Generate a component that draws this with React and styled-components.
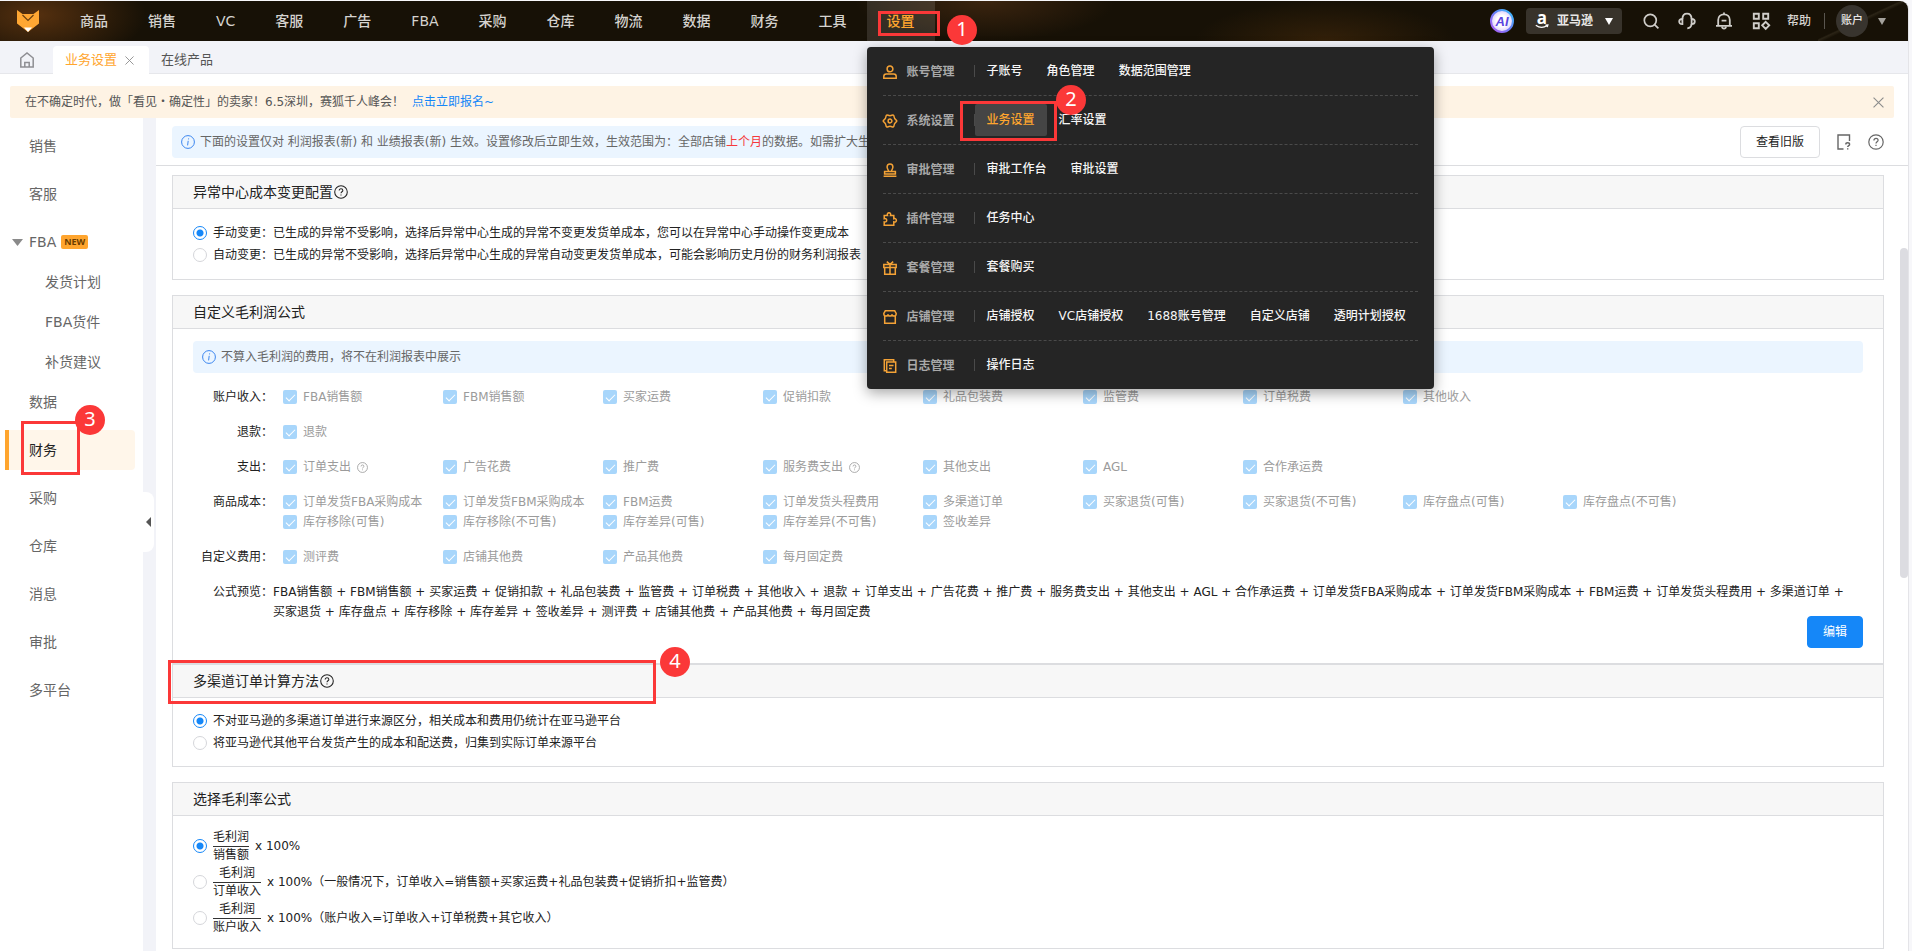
import React, { useState } from "react";
import styled, { createGlobalStyle, ThemeProvider, css } from "styled-components";

const theme = {
  brand: "#ffa52e",
  primary: "#1587f8",
  text: "#222222",
  sub: "#666666",
  disabled: "#9b9b9b",
  line: "#dcdde0",
  page: "#f2f3f8",
  mark: "#fb3838",
};

const GlobalStyle = createGlobalStyle`
  *, *::before, *::after { box-sizing: border-box; }
  body {
    margin: 0;
    background: #f7f7fa;
    color: #222222;
    font: 12px/20px "DejaVu Sans", "Noto Sans CJK SC", sans-serif;
  }
  a { color: inherit; text-decoration: none; }
  ul { list-style: none; margin: 0; padding: 0; }
  button, select { font: inherit; color: inherit; cursor: pointer; }
  svg { display: block; flex: none; overflow: visible; }
`;

/* ---------- icons ---------- */

const HelpIcon = ({ size = 14 }) => (
  <svg width={size} height={size} viewBox="0 0 16 16" fill="none" stroke="currentColor" strokeWidth="1.2">
    <circle cx="8" cy="8" r="7.2" />
    <path d="M5.9 6.4c0-1.3.9-2.1 2.1-2.1s2.1.8 2.1 1.9c0 1.5-2.1 1.6-2.1 3.2" />
    <path d="M8 10.8v1.2" />
  </svg>
);

const InfoIcon = () => (
  <svg width="14" height="14" viewBox="0 0 14 14" fill="none" stroke="#3b86f0" strokeWidth="1">
    <circle cx="7" cy="7" r="6.4" />
    <path d="M7.2 5.8 6.6 10.4M7.6 3.4 7.5 4.4" />
  </svg>
);

const CloseIcon = ({ size }) => (
  <svg width={size} height={size} viewBox="0 0 10 10" fill="none" stroke="#8c8c8c" strokeWidth="1">
    <path d="M.5.5l9 9M9.5.5l-9 9" />
  </svg>
);

const FoxLogo = () => (
  <svg width="24" height="24" viewBox="0 0 24 24">
    <path d="M1 1 6.5 5h11L23 1v13.5L12 23 1 14.500z" fill="#ffa733" />
    <path d="M6.500 6 12 11.500 17.500 6" fill="none" stroke="#6b400f" strokeWidth="1.2" />
    <path d="M8 18.600h8L12 23z" fill="#fff" />
  </svg>
);

const HomeIcon = () => (
  <svg width="16" height="16" viewBox="0 0 16 16" fill="none" stroke="#8e8e93" strokeWidth="1.5">
    <path d="M1.800 6 8 1l6.200 5v9H1.800z" />
    <path d="M5.800 15v-4.500h4.400V15" />
  </svg>
);

const AiIcon = () => (
  <svg width="24" height="24" viewBox="0 0 24 24">
    <defs>
      <linearGradient id="ai-ring" x1="0" y1="1" x2="1" y2="0">
        <stop offset="0" stopColor="#b45cf5" />
        <stop offset=".5" stopColor="#6a7cf8" />
        <stop offset="1" stopColor="#35c3fa" />
      </linearGradient>
      <radialGradient id="ai-fill">
        <stop offset=".5" stopColor="#ffffff" />
        <stop offset="1" stopColor="#dccdfb" />
      </radialGradient>
    </defs>
    <circle cx="12" cy="12" r="11" fill="url(#ai-fill)" stroke="url(#ai-ring)" strokeWidth="2" />
    <text x="12" y="16.500" textAnchor="middle" fontFamily="Liberation Sans, sans-serif" fontSize="13" fontWeight="700" fontStyle="italic" fill="#5b45e0">
      AI
    </text>
  </svg>
);

const AmazonIcon = () => (
  <svg width="14" height="16" viewBox="0 0 14 16">
    <text x="7" y="11" textAnchor="middle" fontFamily="Open Sans, sans-serif" fontSize="17" fontWeight="700" fill="#fff">
      a
    </text>
    <path d="M.8 12.200c3.400 2.600 8 2.600 11.400.4M10.500 12.200l2.400-.2-.6 2.200" fill="none" stroke="#fff" strokeWidth="1.200" />
  </svg>
);

const Caret = ({ width = 8, height = 7, color = "#fff" }) => (
  <svg width={width} height={height} viewBox="0 0 8 7" preserveAspectRatio="none" fill={color}>
    <path d="M0 0h8L4 7z" />
  </svg>
);

const SearchIcon = () => (
  <svg width="16" height="16" viewBox="0 0 16 16" fill="none" stroke="#cfcdc9" strokeWidth="1.700">
    <circle cx="7.300" cy="7.300" r="6" />
    <path d="m11.600 11.600 3.800 3.800" />
  </svg>
);

const HeadsetIcon = () => (
  <svg width="18" height="18" viewBox="0 0 18 18" fill="none" stroke="#cfcdc9" strokeWidth="1.800">
    <path d="M4.400 12.200C2 12.200 1.200 10.800 1.200 9.500S2 6.800 4.400 6.800v5.400zM13.600 6.800c2.400 0 3.200 1.400 3.200 2.700s-.8 2.700-3.200 2.700V6.800z" />
    <path d="M4.400 6.800C4.600 3.500 6.200 1.700 9 1.700s4.400 1.800 4.600 5.100M13.600 12.200c-.3 2.600-1.600 4-4.300 4.200" />
  </svg>
);

const BellIcon = () => (
  <svg width="18" height="18" viewBox="0 0 18 18" fill="none" stroke="#cfcdc9" strokeWidth="1.800">
    <path d="M1 13.800h16M3.200 13.800V8c0-3.300 2.400-5.600 5.800-5.600s5.800 2.300 5.800 5.600v5.800M9 2.400V.6M6.600 8.700h4.800" />
    <path d="M7 14.600c.2 1.400 1 2 2 2s1.800-.6 2-2" />
  </svg>
);

const AppsIcon = () => (
  <svg width="18" height="18" viewBox="0 0 18 18" fill="none" stroke="#cfcdc9" strokeWidth="1.900">
    <path d="M1.800 1.800h5v5h-5zM11.200 1.800h5v5h-5zM1.800 11.200h5v5h-5zM13.700 9.800l3.500 3.500-3.500 3.500-3.500-3.500z" />
  </svg>
);

const GuideIcon = () => (
  <svg width="16" height="16" viewBox="0 0 16 16" fill="none" stroke="#666" strokeWidth="1.400">
    <path d="M7.500 15H2V1h11.500v6" />
    <path d="M9.800 10.500c0-1.100.8-1.700 1.900-1.700s1.900.7 1.900 1.600c0 1.200-1.900 1.300-1.900 2.700M11.700 14.200v1.200" />
  </svg>
);

const MENU_PATHS = {
  account: "M7 1a2.900 2.900 0 1 1 0 5.800A2.900 2.900 0 0 1 7 1zM.8 13.200v-1.700c0-1.500 1-2.500 2.500-2.500h7.400c1.500 0 2.500 1 2.500 2.500v1.700z",
  system:
    "M12.920 5.780Q14.600 7 12.920 8.220Q11.240 9.450 11.020 11.500Q10.800 13.580 8.900 12.740Q7 11.900 5.100 12.740Q3.200 13.580 2.980 11.500Q2.760 9.450 1.080 8.220Q-.6 7 1.080 5.780Q2.760 4.550 2.980 2.500Q3.200.42 5.100 1.260Q7 2.100 8.900 1.260Q10.800.42 11.020 2.500Q11.240 4.550 12.920 5.780zM7 5.100a1.900 1.900 0 1 1 0 3.800 1.900 1.900 0 0 1 0-3.800z",
  approve: "M5.600 8.300c0-1.400-1.500-2.200-1.500-4.200C4.100 2.200 5.300.9 7 .9s2.900 1.300 2.900 3.200c0 2-1.500 2.800-1.500 4.200M1.600 11V8.500h10.800V11zM.6 13.200h12.800",
  plugin:
    "M1.200 3.600h3.300c-.6-1.600.2-2.900 1.500-2.900s2.100 1.300 1.500 2.900h3.300v3.100c1.500-.5 2.600.3 2.600 1.600s-1.100 2.100-2.600 1.600v3.300H1.200V9.900c1.700.4 2.500-.5 2.500-1.600S2.900 6.300 1.200 6.700z",
  package: "M.8 3.400h12.400v3.100H.8zM1.700 6.500v6.700h10.600V6.500M7 3.400v9.800M3.800.6 7 3.400 10.200.6",
  shop: "M1.700 6.300v6.900h10.600V6.300M2.300.8h9.400l1.500 2.700c0 1.700-.8 2.600-2.100 2.600S9 5.300 9 4.200c0 1.100-.8 1.900-2 1.900s-2-.8-2-1.900c0 1.100-.8 1.900-2.100 1.900S.8 5.200.8 3.500z",
  log: "M3.700 3h9v10.300h-9zM10.700 3V.8H1.300v11h2.400M6 6.500h4.500M6 9.500h2.800",
};

const MenuIcon = ({ name }) => (
  <svg width="14" height="14" viewBox="0 0 14 14" fill="none" stroke="#f4a236" strokeWidth="1.500">
    <path d={MENU_PATHS[name]} />
  </svg>
);

/* ---------- layout ---------- */

const Page = styled.div`
  position: relative;
  height: 100vh;
  overflow: hidden;
  padding: 1px 3px 0 0;
`;

const Window = styled.div`
  height: 100%;
  display: flex;
  flex-direction: column;
  background: #ffffff;
  border-right: 1px solid #e4e4e8;
  border-top-right-radius: 8px;
`;

const TopBar = styled.header`
  position: relative;
  z-index: 2;
  flex: none;
  display: flex;
  align-items: stretch;
  height: 40px;
  padding-left: 16px;
  padding-right: 22px;
  border-top-right-radius: 8px;
  color: #d5d3cf;
  background:
    linear-gradient(155deg, transparent 46%, #2b2416 48%, transparent 52%) right / 90px 100% no-repeat,
    radial-gradient(ellipse 110px 50px at 36px 14px, #55300f, transparent) no-repeat,
    radial-gradient(ellipse 130px 40px at 985px 0, #3b240f, transparent) no-repeat,
    radial-gradient(ellipse 130px 40px at 1325px 40px, #332009, transparent) no-repeat,
    #171106;
`;

const Logo = styled.a`
  display: flex;
  align-items: center;
  width: 44px;
`;

const Nav = styled.ul`
  display: flex;
  flex: 1;
`;

const NavItem = styled.li`
  position: relative;
  font-size: 14px;
  font-weight: 500;
  line-height: 40px;
  ${({ $active }) => $active && css`
    color: ${({ theme }) => theme.brand};
    background: rgba(255, 255, 255, 0.12);
  `}

  > a {
    display: block;
    padding: 0 20px;
  }
`;

const Menu = styled.div`
  position: absolute;
  top: calc(100% + 6px);
  left: 0;
  width: 567px;
  padding: 0 16px;
  border-radius: 4px;
  background: #252525;
  box-shadow: 0 4px 14px rgba(0, 0, 0, 0.35);
  font-size: 12px;
  line-height: 32px;
  white-space: nowrap;
`;

const MenuRow = styled.div`
  display: flex;
  align-items: center;
  height: 49px;
  border-bottom: 1px dashed #4a4a4a;

  &:last-child {
    height: 48px;
    border-bottom: 0;
  }
`;

const MenuGroup = styled.div`
  flex: none;
  display: flex;
  align-items: center;
  gap: 10px;
  width: 91px;
  padding-top: 2px;
  color: #a9a9a9;
  font-weight: 700;
`;

const MenuLinks = styled.div`
  display: flex;
  align-items: center;
  color: #f6f6f6;

  &::before {
    content: "";
    width: 1px;
    height: 12px;
    background: #4a4a4a;
  }
`;

const MenuLink = styled.a`
  padding: 0 12px;
  border-radius: 2px;
  ${({ $active }) => $active && css`
    color: ${({ theme }) => theme.brand};
    background: #454545;
  `}
`;

const Tools = styled.div`
  display: flex;
  align-items: center;
  font-weight: 500;
`;

const PlainButton = styled.button`
  display: flex;
  align-items: center;
  justify-content: center;
  padding: 0;
  border: 0;
  background: none;
`;

const ToolIcons = styled.div`
  display: flex;
  align-items: center;
  gap: 19px;
  margin: 0 17px 0 21px;
`;

const Platform = styled.label`
  display: flex;
  align-items: center;
  gap: 8px;
  height: 26px;
  margin-left: 12px;
  padding: 0 9px;
  border-radius: 4px;
  background: #38332b;
  color: #e8e7e5;

  select {
    appearance: none;
    width: 40px;
    padding: 0;
    border: 0;
    background: none;
    font-weight: 700;
  }
`;

const Account = styled(PlainButton)`
  gap: 10px;
  margin-left: 13px;
  padding-left: 12px;
  position: relative;

  &::before {
    content: "";
    position: absolute;
    left: 0;
    width: 1px;
    height: 16px;
    background: #5a564f;
  }
`;

const Avatar = styled.span`
  width: 32px;
  height: 32px;
  border-radius: 50%;
  background: #38342e;
  color: #e8e7e5;
  font-size: 11px;
  line-height: 32px;
  text-align: center;
`;

const Tabs = styled.div`
  flex: none;
  display: flex;
  align-items: flex-end;
  height: 33px;
  background: ${({ theme }) => theme.page};
  box-shadow: inset 0 -1px #e6e7eb;
  font-size: 13px;
`;

const HomeTab = styled.a`
  display: flex;
  align-items: center;
  justify-content: center;
  width: 53px;
  height: 28px;
`;

const Tab = styled.div`
  display: flex;
  align-items: center;
  gap: 8px;
  height: 28px;
  padding: 0 15px 0 12px;
  border-radius: 4px 4px 0 0;
  color: ${({ theme, $active }) => ($active ? theme.brand : "#555555")};
  background: ${({ $active }) => ($active ? "#ffffff" : "none")};
`;

const Notice = styled.div`
  flex: none;
  display: flex;
  align-items: center;
  height: 32px;
  margin: 12px 14px 0 10px;
  padding: 0 10px 0 15px;
  border-radius: 2px;
  background: #fef3e4;
  color: #555555;

  a {
    flex: 1;
    margin-left: 8px;
    color: ${({ theme }) => theme.primary};
  }
`;

const Body = styled.div`
  flex: 1;
  min-height: 0;
  display: flex;
`;

const SideBar = styled.nav`
  position: relative;
  flex: none;
  width: 156px;
  padding: 8px 8px 0 5px;
  border-right: 13px solid ${({ theme }) => theme.page};
  font-size: 14px;
  line-height: 40px;
  color: ${({ theme }) => theme.sub};
`;

const SideItem = styled.a`
  display: block;
  height: 40px;
  margin-bottom: 8px;
  padding-left: 24px;
  ${({ $active }) => $active && css`
    padding-left: 20px;
    border-left: 4px solid ${({ theme }) => theme.brand};
    border-radius: 0 4px 4px 0;
    background: #fff6ea;
    color: ${({ theme }) => theme.text};
  `}
`;

const SideGroup = styled.button`
  display: flex;
  align-items: center;
  gap: 5px;
  width: 100%;
  height: 40px;
  padding: 0 0 0 7px;
  border: 0;
  background: none;

  svg {
    margin-right: 1px;
  }
`;

const SubItem = styled.a`
  display: block;
  height: 40px;
  padding-left: 40px;
`;

const NewTag = styled.span`
  padding: 0 3px;
  border-radius: 2px;
  background: ${({ theme }) => theme.brand};
  color: #6b3d00;
  font: 700 9px/14px "Noto Sans", sans-serif;
`;

const Collapse = styled(PlainButton)`
  position: absolute;
  right: -11px;
  top: 374px;
  width: 11px;
  height: 60px;
  border-radius: 0 8px 8px 0;
  background: #ffffff;
`;

const Main = styled.main`
  flex: 1;
  min-width: 0;
  display: flex;
  flex-direction: column;
`;

const MainHead = styled.div`
  flex: none;
  display: flex;
  align-items: center;
  justify-content: space-between;
  height: 48px;
  padding: 0 24px 0 16px;
  border-bottom: 1px solid ${({ theme }) => theme.line};
`;

const Tip = styled.div`
  display: flex;
  align-items: center;
  gap: 5px;
  height: 32px;
  padding: 0 9px;
  border-radius: 4px;
  background: #ebf5ff;
  color: ${({ theme }) => theme.sub};
  white-space: nowrap;

  em {
    font-style: normal;
    color: #f5393c;
  }
`;

const HeadActions = styled.div`
  display: flex;
  align-items: center;
  gap: 16px;
  color: ${({ theme }) => theme.sub};
`;

const Button = styled.button`
  height: 32px;
  padding: 0 15px;
  border: 1px solid ${({ theme, $primary }) => ($primary ? theme.primary : theme.line)};
  border-radius: 4px;
  background: ${({ theme, $primary }) => ($primary ? theme.primary : "#ffffff")};
  color: ${({ theme, $primary }) => ($primary ? "#ffffff" : theme.text)};
`;

const Scroll = styled.div`
  flex: 1;
  min-height: 0;
  display: flex;
  overflow: hidden;
`;

const Cards = styled.div`
  flex: 1;
  min-width: 0;
  padding: 9px 16px 0;
`;

const Thumb = styled.div`
  width: 8px;
  height: 42%;
  margin-top: 82px;
  border-radius: 4px;
  background: #dcdce1;
`;

const Card = styled.section`
  margin-bottom: ${({ $joined }) => ($joined ? 0 : 15)}px;
  border: 1px solid ${({ theme }) => theme.line};
`;

const CardTitle = styled.h2`
  display: flex;
  align-items: center;
  gap: 1px;
  height: 33px;
  margin: 0;
  padding: 0 20px;
  border-bottom: 1px solid ${({ theme }) => theme.line};
  background: #f7f7f7;
  font-size: 14px;
  font-weight: 400;
`;

const CardBody = styled.div`
  padding: ${({ $pad = 12 }) => $pad}px 20px;
`;

const RadioLine = styled.label`
  display: flex;
  align-items: center;
  gap: 6px;
  min-height: 22px;

  input {
    appearance: none;
    flex: none;
    width: 14px;
    height: 14px;
    margin: 0;
    border: 1px solid #d5d6da;
    border-radius: 50%;
    background: #ffffff;
  }

  input:checked {
    border-color: ${({ theme }) => theme.primary};
    background: radial-gradient(circle, ${({ theme }) => theme.primary} 3px, #ffffff 4px);
  }
`;

const RatioLine = styled(RadioLine)`
  height: 36px;
`;

const Fraction = styled.span`
  text-align: center;
  line-height: 17px;

  span {
    display: block;
  }

  span:first-child {
    border-bottom: 1px solid #333333;
  }
`;

const FeeTable = styled.div`
  padding-top: 14px;
`;

const FeeRow = styled.div`
  display: flex;
  margin-bottom: 15px;

  &:last-child {
    margin-bottom: 0;
  }
`;

const FeeLabel = styled.div`
  flex: none;
  width: 80px;
  text-align: right;
`;

const FeeGrid = styled.div`
  flex: 1;
  display: grid;
  grid-template-columns: repeat(auto-fill, 160px);
  padding-left: 10px;
`;

const CheckLabel = styled.label`
  display: flex;
  align-items: center;
  gap: 6px;
  white-space: nowrap;
  color: ${({ theme }) => theme.disabled};

  input {
    appearance: none;
    display: grid;
    place-content: center;
    width: 14px;
    height: 14px;
    margin: 0;
    border-radius: 2px;
    background: #a8d6fb;
  }

  input:checked::before {
    content: "";
    width: 5px;
    height: 9px;
    margin-bottom: 2px;
    border: solid #ffffff;
    border-width: 0 1px 1px 0;
    transform: rotate(45deg);
  }
`;

const Formula = styled.div`
  flex: 1;
  padding-right: 8px;
`;

const Actions = styled.div`
  display: flex;
  justify-content: flex-end;
  margin-top: -6px;
  padding-bottom: 3px;
`;

/* step markers floating over the page */
const MarkBox = styled.div`
  position: absolute;
  z-index: 3;
  left: ${({ $x }) => $x}px;
  top: ${({ $y }) => $y}px;
  width: ${({ $w }) => $w}px;
  height: ${({ $h }) => $h}px;
  border: 3px solid ${({ theme }) => theme.mark};
  pointer-events: none;
`;

const MarkDot = styled.div`
  position: absolute;
  z-index: 3;
  left: ${({ $x }) => $x}px;
  top: ${({ $y }) => $y}px;
  width: 30px;
  height: 30px;
  border-radius: 50%;
  background: ${({ theme }) => theme.mark};
  color: #ffffff;
  font-family: "Noto Sans", sans-serif;
  font-size: 20px;
  line-height: 28px;
  text-align: center;
`;

/* ---------- data ---------- */

const NAV = ["商品", "销售", "VC", "客服", "广告", "FBA", "采购", "仓库", "物流", "数据", "财务", "工具"];

const MENU = [
  { icon: "account", name: "账号管理", links: ["子账号", "角色管理", "数据范围管理"] },
  { icon: "system", name: "系统设置", links: ["业务设置", "汇率设置"] },
  { icon: "approve", name: "审批管理", links: ["审批工作台", "审批设置"] },
  { icon: "plugin", name: "插件管理", links: ["任务中心"] },
  { icon: "package", name: "套餐管理", links: ["套餐购买"] },
  { icon: "shop", name: "店铺管理", links: ["店铺授权", "VC店铺授权", "1688账号管理", "自定义店铺", "透明计划授权"] },
  { icon: "log", name: "日志管理", links: ["操作日志"] },
];

const FEES = [
  { label: "账户收入", items: ["FBA销售额", "FBM销售额", "买家运费", "促销扣款", "礼品包装费", "监管费", "订单税费", "其他收入"] },
  { label: "退款", items: ["退款"] },
  { label: "支出", items: ["订单支出", "广告花费", "推广费", "服务费支出", "其他支出", "AGL", "合作承运费"] },
  {
    label: "商品成本",
    items: [
      "订单发货FBA采购成本", "订单发货FBM采购成本", "FBM运费", "订单发货头程费用", "多渠道订单",
      "买家退货(可售)", "买家退货(不可售)", "库存盘点(可售)", "库存盘点(不可售)",
      "库存移除(可售)", "库存移除(不可售)", "库存差异(可售)", "库存差异(不可售)", "签收差异",
    ],
  },
  { label: "自定义费用", items: ["测评费", "店铺其他费", "产品其他费", "每月固定费"] },
];

const WITH_HELP = ["订单支出", "服务费支出"];

const FORMULA =
  "FBA销售额 + FBM销售额 + 买家运费 + 促销扣款 + 礼品包装费 + 监管费 + 订单税费 + 其他收入 + 退款 + 订单支出 + 广告花费 + 推广费 + 服务费支出 + 其他支出 + AGL + 合作承运费 + 订单发货FBA采购成本 + 订单发货FBM采购成本 + FBM运费 + 订单发货头程费用 + 多渠道订单 + 买家退货 + 库存盘点 + 库存移除 + 库存差异 + 签收差异 + 测评费 + 店铺其他费 + 产品其他费 + 每月固定费";

const COST_MODES = [
  "手动变更：已生成的异常不受影响，选择后异常中心生成的异常不变更发货单成本，您可以在异常中心手动操作变更成本",
  "自动变更：已生成的异常不受影响，选择后异常中心生成的异常自动变更发货单成本，可能会影响历史月份的财务利润报表",
];

const CHANNEL_MODES = [
  "不对亚马逊的多渠道订单进行来源区分，相关成本和费用仍统计在亚马逊平台",
  "将亚马逊代其他平台发货产生的成本和配送费，归集到实际订单来源平台",
];

const RATIOS = [
  { base: "销售额", note: "" },
  { base: "订单收入", note: "（一般情况下，订单收入=销售额+买家运费+礼品包装费+促销折扣+监管费）" },
  { base: "账户收入", note: "（账户收入=订单收入+订单税费+其它收入）" },
];

/* ---------- parts ---------- */

const RadioGroup = ({ name, options }) => {
  const [value, setValue] = useState(0);
  return options.map((text, i) => (
    <RadioLine key={text}>
      <input type="radio" name={name} checked={value === i} onChange={() => setValue(i)} />
      {text}
    </RadioLine>
  ));
};

const SettingsMenu = () => (
  <Menu>
    {MENU.map((row) => (
      <MenuRow key={row.name}>
        <MenuGroup>
          <MenuIcon name={row.icon} />
          {row.name}
        </MenuGroup>
        <MenuLinks>
          {row.links.map((link) => (
            <MenuLink key={link} href="#" $active={link === "业务设置"}>{link}</MenuLink>
          ))}
        </MenuLinks>
      </MenuRow>
    ))}
  </Menu>
);

const Header = () => (
  <TopBar>
    <Logo href="#" aria-label="首页"><FoxLogo /></Logo>
    <Nav>
      {NAV.map((item) => (
        <NavItem key={item}><a href="#">{item}</a></NavItem>
      ))}
      <NavItem $active>
        <a href="#">设置</a>
        <SettingsMenu />
      </NavItem>
    </Nav>
    <Tools>
      <PlainButton aria-label="AI"><AiIcon /></PlainButton>
      <Platform>
        <AmazonIcon />
        <select aria-label="平台">
          <option>亚马逊</option>
        </select>
        <Caret />
      </Platform>
      <ToolIcons>
        <PlainButton aria-label="搜索"><SearchIcon /></PlainButton>
        <PlainButton aria-label="客服"><HeadsetIcon /></PlainButton>
        <PlainButton aria-label="通知"><BellIcon /></PlainButton>
        <PlainButton aria-label="应用"><AppsIcon /></PlainButton>
      </ToolIcons>
      <a href="#">帮助</a>
      <Account>
        <Avatar>账户</Avatar>
        <Caret color="#a5a29c" />
      </Account>
    </Tools>
  </TopBar>
);

const Side = () => (
  <SideBar>
    <SideItem href="#">销售</SideItem>
    <SideItem href="#">客服</SideItem>
    <SideGroup>
      <Caret width={11} color="#8a8a8a" />
      FBA
      <NewTag>NEW</NewTag>
    </SideGroup>
    <SubItem href="#">发货计划</SubItem>
    <SubItem href="#">FBA货件</SubItem>
    <SubItem href="#">补货建议</SubItem>
    {["数据", "财务", "采购", "仓库", "消息", "审批", "多平台"].map((item) => (
      <SideItem key={item} href="#" $active={item === "财务"}>{item}</SideItem>
    ))}
    <Collapse aria-label="收起">
      <svg width="5" height="10" viewBox="0 0 5 10"><path d="M5 0v10L0 5z" fill="#555" /></svg>
    </Collapse>
  </SideBar>
);

const FormulaCard = () => (
  <Card $joined>
    <CardTitle>自定义毛利润公式</CardTitle>
    <CardBody>
      <Tip><InfoIcon />不算入毛利润的费用，将不在利润报表中展示</Tip>
      <FeeTable>
        {FEES.map((fee) => (
          <FeeRow key={fee.label}>
            <FeeLabel>{fee.label}：</FeeLabel>
            <FeeGrid>
              {fee.items.map((item) => (
                <CheckLabel key={item}>
                  <input type="checkbox" checked disabled readOnly />
                  {item}
                  {WITH_HELP.includes(item) && <HelpIcon size={11} />}
                </CheckLabel>
              ))}
            </FeeGrid>
          </FeeRow>
        ))}
        <FeeRow>
          <FeeLabel>公式预览：</FeeLabel>
          <Formula>{FORMULA}</Formula>
        </FeeRow>
      </FeeTable>
      <Actions>
        <Button $primary>编辑</Button>
      </Actions>
    </CardBody>
  </Card>
);

const RatioCard = () => {
  const [value, setValue] = useState(0);
  return (
    <Card>
      <CardTitle>选择毛利率公式</CardTitle>
      <CardBody>
        {RATIOS.map((ratio, i) => (
          <RatioLine key={ratio.base}>
            <input type="radio" name="ratio" checked={value === i} onChange={() => setValue(i)} />
            <Fraction>
              <span>毛利润</span>
              <span>{ratio.base}</span>
            </Fraction>
            x 100%{ratio.note}
          </RatioLine>
        ))}
      </CardBody>
    </Card>
  );
};

const App = () => (
  <ThemeProvider theme={theme}>
    <GlobalStyle />
    <Page>
      <Window>
        <Header />
        <Tabs>
          <HomeTab href="#" aria-label="首页"><HomeIcon /></HomeTab>
          <Tab $active>
            <a href="#">业务设置</a>
            <PlainButton aria-label="关闭"><CloseIcon size={9} /></PlainButton>
          </Tab>
          <Tab><a href="#">在线产品</a></Tab>
        </Tabs>
        <Notice>
          在不确定时代，做「看见・确定性」的卖家！6.5深圳，赛狐千人峰会！
          <a href="#">点击立即报名~</a>
          <PlainButton aria-label="关闭"><CloseIcon size={11} /></PlainButton>
        </Notice>
        <Body>
          <Side />
          <Main>
            <MainHead>
              <Tip>
                <InfoIcon />
                <span>
                  下面的设置仅对 利润报表(新) 和 业绩报表(新) 生效。设置修改后立即生效，生效范围为：全部店铺<em>上个月</em>的数据。如需扩大生效范围
                </span>
              </Tip>
              <HeadActions>
                <Button>查看旧版</Button>
                <PlainButton aria-label="指引"><GuideIcon /></PlainButton>
                <PlainButton aria-label="帮助"><HelpIcon size={16} /></PlainButton>
              </HeadActions>
            </MainHead>
            <Scroll>
              <Cards>
                <Card>
                  <CardTitle>异常中心成本变更配置<HelpIcon /></CardTitle>
                  <CardBody $pad={13}>
                    <RadioGroup name="cost" options={COST_MODES} />
                  </CardBody>
                </Card>
                <FormulaCard />
                <Card>
                  <CardTitle>多渠道订单计算方法<HelpIcon /></CardTitle>
                  <CardBody>
                    <RadioGroup name="channel" options={CHANNEL_MODES} />
                  </CardBody>
                </Card>
                <RatioCard />
              </Cards>
              <Thumb />
            </Scroll>
          </Main>
        </Body>
      </Window>

      <MarkBox $x={878} $y={11} $w={62} $h={25} />
      <MarkDot $x={947} $y={15}>1</MarkDot>
      <MarkBox $x={960} $y={101} $w={97} $h={40} />
      <MarkDot $x={1056} $y={85}>2</MarkDot>
      <MarkBox $x={21} $y={421} $w={59} $h={54} />
      <MarkDot $x={75} $y={405}>3</MarkDot>
      <MarkBox $x={168} $y={660} $w={488} $h={44} />
      <MarkDot $x={660} $y={647}>4</MarkDot>
    </Page>
  </ThemeProvider>
);

export default App;
